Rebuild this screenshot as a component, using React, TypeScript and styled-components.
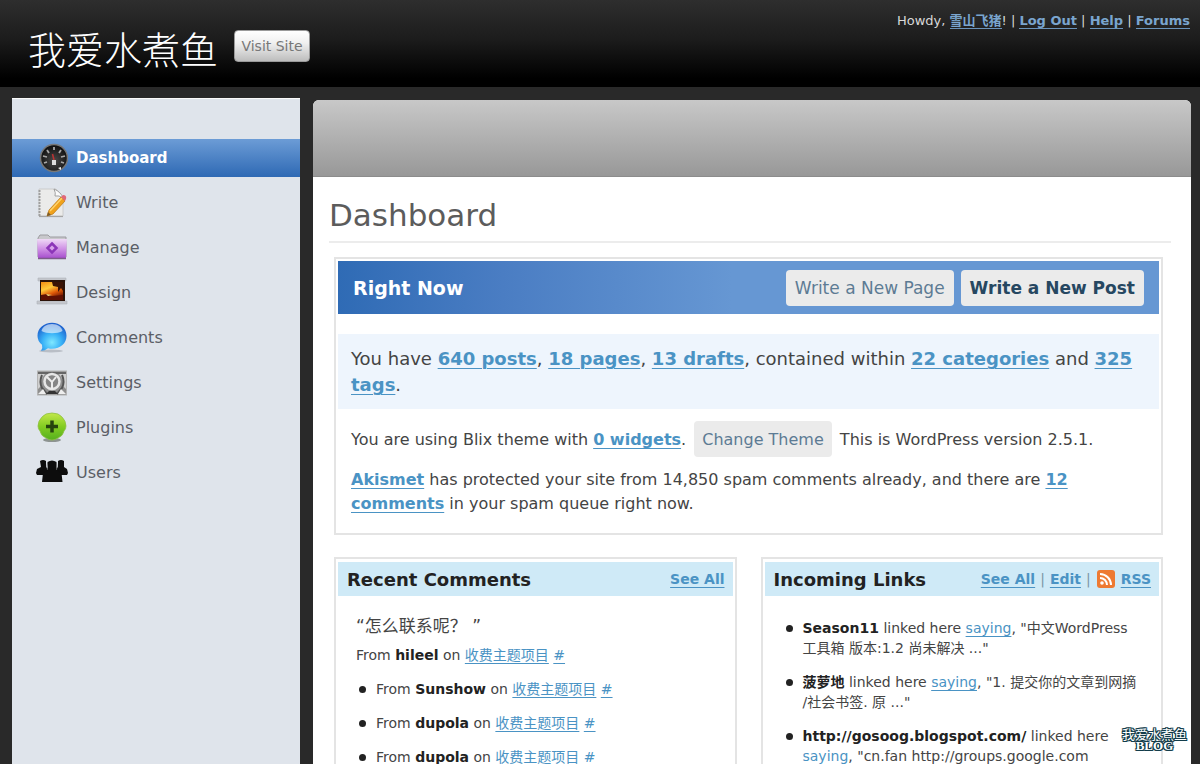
import React from "react";
import styled, { createGlobalStyle, css } from "styled-components";

const GlobalStyle = createGlobalStyle`
  *, *::before, *::after { box-sizing: border-box; }
  html, body { margin: 0; padding: 0; background: #292929; }
  body {
    font-family: "DejaVu Sans", "Noto Sans CJK SC", sans-serif;
    font-size: 16px;
    color: #444;
  }
  h1, h2, h3, p, ul { margin: 0; padding: 0; }
`;

const Page = styled.div`
  position: relative;
  display: flex;
  flex-direction: column;
  height: 100vh;
  overflow: hidden;
`;

const Header = styled.header`
  display: flex;
  flex: none;
  justify-content: space-between;
  align-items: flex-start;
  height: 87px;
  padding: 0 10px 0 28px;
  background: linear-gradient(#2e2e2e, #1c1c1c 45%, #000 90%);
`;

const Brand = styled.div`
  display: flex;
  align-items: center;
  gap: 16px;
  padding-top: 24px;
`;

const SiteName = styled.h1`
  font-family: "Noto Sans CJK SC", sans-serif;
  font-weight: 300;
  font-size: 38px;
  line-height: 48px;
  color: #fff;
`;

const VisitButton = styled.button`
  height: 32px;
  width: 76px;
  margin-bottom: 4px;
  padding: 0;
  border: 1px solid #9a9a9a;
  border-radius: 4px;
  background: linear-gradient(#fff, #f0f0f0 40%, #bdbdbd);
  font: 14px "DejaVu Sans", sans-serif;
  color: #777;
  white-space: nowrap;
`;

const UserMenu = styled.nav`
  padding-top: 12px;
  font-size: 13px;
  line-height: 18px;
  color: #d8d8d8;
  white-space: nowrap;
`;

const HeaderLink = styled.a`
  color: #7aa5cf;
  font-weight: bold;
  text-decoration: none;
  border-bottom: 1px solid #6a93bb;
`;

const Body = styled.div`
  display: grid;
  flex: 1;
  grid-template-columns: 288px 1fr;
  gap: 13px;
  min-height: 0;
  padding: 11px 9px 0 12px;
`;

const Sidebar = styled.aside`
  padding-top: 40px;
  border-top: 1px solid #fafafa;
  background: #dfe4eb;
`;

const MenuItem = styled.a<{ $active?: boolean }>`
  display: flex;
  align-items: center;
  gap: 8px;
  height: 45px;
  padding-left: 24px;
  font-size: 16px;
  color: #5b5e66;
  text-decoration: none;
  ${(p) =>
    p.$active &&
    css`
      height: 38px;
      margin-bottom: 3px;
      font-size: 15px;
      font-weight: bold;
      color: #fff;
      background: linear-gradient(#6c9cd6, #2e69b4);
    `}
`;

const MenuIcon = styled.svg`
  flex: none;
  width: 32px;
  height: 32px;
`;

const Main = styled.main`
  min-width: 0;
  margin-top: 2px;
  border-radius: 6px 6px 0 0;
  background: #fff;
`;

const Banner = styled.div`
  height: 77px;
  border-bottom: 1px solid #8c8c8c;
  border-radius: 6px 6px 0 0;
  background: linear-gradient(#c8c8c8, #989898);
`;

const Content = styled.div`
  padding: 18px 20px 0 16px;
`;

const PageTitle = styled.h2`
  padding-bottom: 6px;
  border-bottom: 2px solid #ececec;
  font-size: 31px;
  font-weight: normal;
  line-height: 40px;
  color: #5c5c5c;
`;

const Panels = styled.div`
  display: grid;
  grid-template-columns: minmax(0, 1fr) minmax(0, 1fr);
  gap: 22px 24px;
  padding: 14px 8px 0 5px;
`;

const Panel = styled.section<{ $wide?: boolean }>`
  padding: 3px 2px 0;
  border: 2px solid #e4e4e4;
  ${(p) => p.$wide && "grid-column: 1 / -1; padding-top: 2px;"}
`;

const RightNowBar = styled.div`
  display: flex;
  align-items: center;
  gap: 7px;
  height: 53px;
  padding: 0 15px;
  background: linear-gradient(90deg, #2f6bb5, #4a7dc3 20%, #6697d3 48%);
`;

const RightNowTitle = styled.h3`
  flex: 1;
  font-size: 19px;
  color: #fff;
`;

const ActionButton = styled.button<{ $strong?: boolean }>`
  height: 36px;
  padding: 0 9px;
  border: 0;
  border-radius: 4px;
  background: #ebebeb;
  font-family: inherit;
  font-size: 17px;
  color: #5d7b94;
  white-space: nowrap;
  ${(p) => p.$strong && "color: #264761; font-weight: bold;"}
`;

const ThemeButton = styled(ActionButton)`
  margin: 0 3px;
  padding: 0 8px;
  font-size: 16px;
`;

const Summary = styled.p`
  margin-top: 20px;
  padding: 12px 13px 11px;
  background: #eef5fd;
  font-size: 18px;
  line-height: 26px;
`;

const Details = styled.div`
  padding: 12px 13px 17px;
  font-size: 16px;
  line-height: 24px;
`;

const DetailRow = styled.p`
  & + & { margin-top: 11px; }
`;

const TextLink = styled.a<{ $plain?: boolean }>`
  color: #4a93c4;
  font-weight: ${(p) => (p.$plain ? "normal" : "bold")};
  text-decoration: underline;
  text-decoration-thickness: 1px;
  text-underline-offset: 3px;
`;

const PanelBar = styled.div`
  display: flex;
  align-items: center;
  justify-content: space-between;
  height: 34px;
  padding: 0 8px 0 9px;
  background: #cfeaf7;
`;

const PanelTitle = styled.h3`
  font-size: 18px;
  color: #222;
`;

const PanelLinks = styled.span`
  display: flex;
  align-items: center;
  gap: 5px;
  font-size: 14px;
  color: #7a96a5;
`;

const RssIcon = styled.svg`
  width: 20px;
  height: 20px;
`;

const PanelBody = styled.div`
  padding: 18px 18px 0;
  font-size: 14px;
  line-height: 20px;
`;

const Quote = styled.p`
  margin-bottom: 7px;
  font-size: 17px;
  line-height: 24px;
`;

const BulletList = styled.ul<{ $first?: boolean }>`
  padding-left: 20px;
  list-style: none;
  li { position: relative; margin-top: 14px; white-space: nowrap; }
  li:first-child { margin-top: ${(p) => (p.$first ? 4 : 14)}px; }
  li::before {
    content: "";
    position: absolute;
    left: -17px;
    top: 7px;
    width: 7px;
    height: 7px;
    border-radius: 50%;
    background: #222;
  }
`;

const Strong = styled.strong`
  color: #222;
`;

const Watermark = styled.div`
  position: absolute;
  right: 13px;
  bottom: 12px;
  color: #fff;
  font: 13px/13px "Noto Sans CJK SC", sans-serif;
  text-align: center;
  text-shadow: 1px 0 #123c4a, -1px 0 #123c4a, 0 1px #123c4a, 0 -1px #123c4a,
    1px 1px #123c4a, -1px -1px #123c4a, 1px -1px #123c4a, -1px 1px #123c4a;
`;

const WatermarkBlog = styled.div`
  font: bold 13px/12px "Liberation Serif", serif;
`;

const DashboardIcon = () => (
  <MenuIcon viewBox="0 0 32 32" aria-hidden="true">
    <defs>
      <radialGradient id="dial" cx="50%" cy="60%" r="55%">
        <stop offset="0" stopColor="#4a4a4a" />
        <stop offset="0.7" stopColor="#222" />
        <stop offset="1" stopColor="#111" />
      </radialGradient>
    </defs>
    <circle cx="18" cy="16" r="13.5" fill="url(#dial)" stroke="#777" strokeWidth="1.5" />
    <g stroke="#a8a8a8" strokeWidth="1.8">
      <path d="M18 5v3M11 8l2 3M25 8l-2 3M7 14l4 1M29 14l-4 1M8 21l3-1M28 21l-3-1" />
    </g>
    <path d="M18 18L16.500 12" stroke="#b33" strokeWidth="1.6" />
    <rect x="16" y="18" width="4" height="5" fill="#ddd" />
    <path d="M22 26l3-1v3z" fill="#eee" />
  </MenuIcon>
);

const WriteIcon = () => (
  <MenuIcon viewBox="0 0 32 32" aria-hidden="true">
    <path d="M3 2h17l7 8v19H3z" fill="#ebebea" stroke="#c4c4c4" strokeWidth=".8" />
    <path d="M3.500 3v27" stroke="#9f9f9f" strokeWidth="2" strokeDasharray="2 1" />
    <path d="M3 29.500h24" stroke="#a5a5a5" strokeWidth="1.200" />
    <path d="M18 2q2 4 1 7 4-1 8 2-2-6-9-9z" fill="#fbfbfb" stroke="#999" strokeWidth=".9" />
    <path d="M11 29l2-6L25 10l4 4L17 27z" fill="#f0a21c" stroke="#b87512" strokeWidth=".7" />
    <path d="M14 24L26 11" stroke="#ffd36b" strokeWidth="1.5" />
    <path d="M25 10l2-2q4 0 3 4l-1 2z" fill="#e0697a" />
    <path d="M11 29l1-4 3 3z" fill="#7a5c2e" />
  </MenuIcon>
);

const ManageIcon = () => (
  <MenuIcon viewBox="0 0 32 32" aria-hidden="true">
    <defs>
      <linearGradient id="folder" x1="0" y1="0" x2="0" y2="1">
        <stop offset="0" stopColor="#efd9f6" />
        <stop offset="0.5" stopColor="#d194e6" />
        <stop offset="1" stopColor="#a74fce" />
      </linearGradient>
    </defs>
    <path d="M2 6l2-3h8l2 2h16v20H2z" fill="#c8c8cc" stroke="#9c9ca0" />
    <path d="M1 7h30l-1 19H2z" fill="url(#folder)" />
    <path d="M2 26.500h28" stroke="#7c5b8a" strokeWidth="1.5" />
    <path d="M16 11.500l4.500 4.500-4.500 4.500-4.500-4.500z" fill="#d9a2ea" stroke="#8c35b8" strokeWidth="2.500" />
  </MenuIcon>
);

const DesignIcon = () => (
  <MenuIcon viewBox="0 0 32 32" aria-hidden="true">
    <defs>
      <linearGradient id="sunset" x1="0" y1="0" x2="0.5" y2="1">
        <stop offset="0" stopColor="#f28a12" />
        <stop offset="0.4" stopColor="#ffc93a" />
        <stop offset="0.7" stopColor="#e05a08" />
        <stop offset="1" stopColor="#6b1404" />
      </linearGradient>
    </defs>
    <path d="M2 1h28v3H2zM1 24h30v3H1z" fill="#c3c6cc" stroke="#b0b4ba" strokeWidth=".6" />
    <rect x="4" y="3" width="25" height="21" fill="#2b1208" />
    <rect x="5" y="5" width="22" height="18" fill="url(#sunset)" />
    <path d="M16 5h11v9l-2-3-3 4v-5l-5-1z" fill="#3a1305" />
    <path d="M5 18l6-1 5 2 11-1v5H5z" fill="#5e1003" />
    <path d="M10 17l6 1-4 1z" fill="#ffe680" />
  </MenuIcon>
);

const CommentsIcon = () => (
  <MenuIcon viewBox="0 0 32 32" aria-hidden="true">
    <defs>
      <radialGradient id="bubble" cx="50%" cy="70%" r="65%">
        <stop offset="0" stopColor="#7fe8ff" />
        <stop offset="0.5" stopColor="#39b2f7" />
        <stop offset="1" stopColor="#1e63cf" />
      </radialGradient>
    </defs>
    <ellipse cx="15" cy="29" rx="12" ry="1.500" fill="#b9bec6" />
    <path
      d="M16 .8c8 0 14.500 5.500 14.500 13s-6 13-14.500 13q-2 0-4-.5-3 2.500-7 2.500 2-3 1-6-4.500-3.500-4.500-9c0-7.500 6.500-13 14.500-13z"
      fill="url(#bubble)"
    />
    <path d="M16 2c6 0 9.500 3 10.500 7-5 3-16 3-21 0C6.500 5 10 2 16 2z" fill="#fff" opacity=".6" />
  </MenuIcon>
);

const SettingsIcon = () => (
  <MenuIcon viewBox="0 0 32 32" aria-hidden="true">
    <rect x="1.500" y="4" width="29" height="24" fill="#8f8f8f" stroke="#b4b4b4" />
    <path d="M2 5h28v2H2z" fill="#666" />
    <path d="M2 7h7q-5 6-4 12l-3 3zM30 7h-7q5 6 4 12l3 3z" fill="#cfcfcf" />
    <path d="M6 8q-3 7 0 13l5 6M26 8q3 7 0 13l-5 6" stroke="#555" strokeWidth="2" fill="none" />
    <circle cx="16" cy="14.500" r="7.500" fill="#858585" stroke="#e6e6e6" strokeWidth="2.500" />
    <path d="M16 15l-5-5M16 15l4-5M16 15v7" stroke="#ececec" strokeWidth="2" />
    <path d="M2 27l5-5 3 5zM30 27l-5-5-3 5z" fill="#eee" />
    <path d="M10 27l3-3h6l3 3z" fill="#333" />
  </MenuIcon>
);

const PluginsIcon = () => (
  <MenuIcon viewBox="0 0 32 32" aria-hidden="true">
    <defs>
      <linearGradient id="plug" x1="0" y1="0" x2="0" y2="1">
        <stop offset="0" stopColor="#c3e84a" />
        <stop offset="0.5" stopColor="#83cc22" />
        <stop offset="1" stopColor="#55b01d" />
      </linearGradient>
    </defs>
    <ellipse cx="16" cy="28" rx="9" ry="2" fill="#8d9391" />
    <path d="M16 1q7 0 10 4 4 4 4 9 0 3-2 5-1 5-6 7-3 2-6 2t-6-2q-5-2-6-7-2-2-2-5 0-5 4-9 3-4 10-4z" fill="url(#plug)" stroke="#8fbf45" strokeWidth=".8" />
    <path d="M16 8.500v12M10 14.500h12" stroke="#26440e" strokeWidth="3.500" />
  </MenuIcon>
);

const UsersIcon = () => (
  <MenuIcon viewBox="0 0 32 32" aria-hidden="true">
    <g fill="#0d0d0d">
      <path d="M4 4q3-2 6 0v6l2 2v6H1l-1-2 1-4 4-2z" />
      <path d="M22 4q3-2 6 0v6l3 2 1 4-1 2H20v-6l2-2z" />
      <path d="M11.500 5q4.500-3 9 0v8l5 3 1 9H6l1-9 5-3z" />
    </g>
    <path d="M11.500 6q-1 4 0 7M20.500 6q1 4 0 7" stroke="#666" strokeWidth=".8" fill="none" />
  </MenuIcon>
);

const menu = [
  { label: "Dashboard", Icon: DashboardIcon, active: true },
  { label: "Write", Icon: WriteIcon },
  { label: "Manage", Icon: ManageIcon },
  { label: "Design", Icon: DesignIcon },
  { label: "Comments", Icon: CommentsIcon },
  { label: "Settings", Icon: SettingsIcon },
  { label: "Plugins", Icon: PluginsIcon },
  { label: "Users", Icon: UsersIcon },
];

const CommentSource = ({ author }: { author: string }) => (
  <>
    From <Strong>{author}</Strong> on{" "}
    <TextLink href="#post" $plain>收费主题项目</TextLink>{" "}
    <TextLink href="#comment" $plain>#</TextLink>
  </>
);

export default function App() {
  return (
    <Page>
      <GlobalStyle />
      <Header>
        <Brand>
          <SiteName>我爱水煮鱼</SiteName>
          <VisitButton>Visit Site</VisitButton>
        </Brand>
        <UserMenu>
          Howdy, <HeaderLink href="#profile">雪山飞猪</HeaderLink>! |{" "}
          <HeaderLink href="#logout">Log Out</HeaderLink> |{" "}
          <HeaderLink href="#help">Help</HeaderLink> |{" "}
          <HeaderLink href="#forums">Forums</HeaderLink>
        </UserMenu>
      </Header>
      <Body>
        <Sidebar>
          <nav>
            {menu.map(({ label, Icon, active }) => (
              <MenuItem key={label} href={`#${label.toLowerCase()}`} $active={active}>
                <Icon />
                {label}
              </MenuItem>
            ))}
          </nav>
        </Sidebar>
        <Main>
          <Banner />
          <Content>
            <PageTitle>Dashboard</PageTitle>
            <Panels>
              <Panel $wide>
                <RightNowBar>
                  <RightNowTitle>Right Now</RightNowTitle>
                  <ActionButton>Write a New Page</ActionButton>
                  <ActionButton $strong>Write a New Post</ActionButton>
                </RightNowBar>
                <Summary>
                  You have <TextLink href="#posts">640 posts</TextLink>,{" "}
                  <TextLink href="#pages">18 pages</TextLink>,{" "}
                  <TextLink href="#drafts">13 drafts</TextLink>, contained within{" "}
                  <TextLink href="#categories">22 categories</TextLink> and{" "}
                  <TextLink href="#tags">325 tags</TextLink>.
                </Summary>
                <Details>
                  <DetailRow>
                    You are using Blix theme with <TextLink href="#widgets">0 widgets</TextLink>.{" "}
                    <ThemeButton>Change Theme</ThemeButton> This is WordPress version 2.5.1.
                  </DetailRow>
                  <DetailRow>
                    <TextLink href="#akismet">Akismet</TextLink> has protected your site from
                    14,850 spam comments already, and there are{" "}
                    <TextLink href="#spam">12 comments</TextLink> in your spam queue right now.
                  </DetailRow>
                </Details>
              </Panel>
              <Panel>
                <PanelBar>
                  <PanelTitle>Recent Comments</PanelTitle>
                  <PanelLinks>
                    <TextLink href="#all-comments">See All</TextLink>
                  </PanelLinks>
                </PanelBar>
                <PanelBody>
                  <Quote>“怎么联系呢？ ”</Quote>
                  <p><CommentSource author="hileel" /></p>
                  <BulletList>
                    <li><CommentSource author="Sunshow" /></li>
                    <li><CommentSource author="dupola" /></li>
                    <li><CommentSource author="dupola" /></li>
                  </BulletList>
                </PanelBody>
              </Panel>
              <Panel>
                <PanelBar>
                  <PanelTitle>Incoming Links</PanelTitle>
                  <PanelLinks>
                    <TextLink href="#all-links">See All</TextLink>|
                    <TextLink href="#edit">Edit</TextLink>|
                    <RssIcon viewBox="0 0 20 20" aria-hidden="true">
                      <rect x="1" y="1" width="18" height="18" rx="3" fill="#ee7a32" />
                      <circle cx="6" cy="14" r="1.800" fill="#fff" />
                      <path d="M4 9a7 7 0 0 1 7 7M4 5a11 11 0 0 1 11 11" stroke="#fff" strokeWidth="2" fill="none" />
                    </RssIcon>
                    <TextLink href="#rss">RSS</TextLink>
                  </PanelLinks>
                </PanelBar>
                <PanelBody>
                  <BulletList $first>
                    <li>
                      <Strong>Season11</Strong> linked here <TextLink href="#s1" $plain>saying</TextLink>, "中文WordPress
                      <br />
                      工具箱 版本:1.2 尚未解决 ..."
                    </li>
                    <li>
                      <Strong>菠萝地</Strong> linked here <TextLink href="#s2" $plain>saying</TextLink>, "1. 提交你的文章到网摘
                      <br />
                      /社会书签. 原 ..."
                    </li>
                    <li>
                      <Strong>http://gosoog.blogspot.com/</Strong> linked here
                      <br />
                      <TextLink href="#s3" $plain>saying</TextLink>, "cn.fan http://groups.google.com
                    </li>
                  </BulletList>
                </PanelBody>
              </Panel>
            </Panels>
          </Content>
        </Main>
      </Body>
      <Watermark>
        我爱水煮鱼
        <WatermarkBlog>BLOG</WatermarkBlog>
      </Watermark>
    </Page>
  );
}
